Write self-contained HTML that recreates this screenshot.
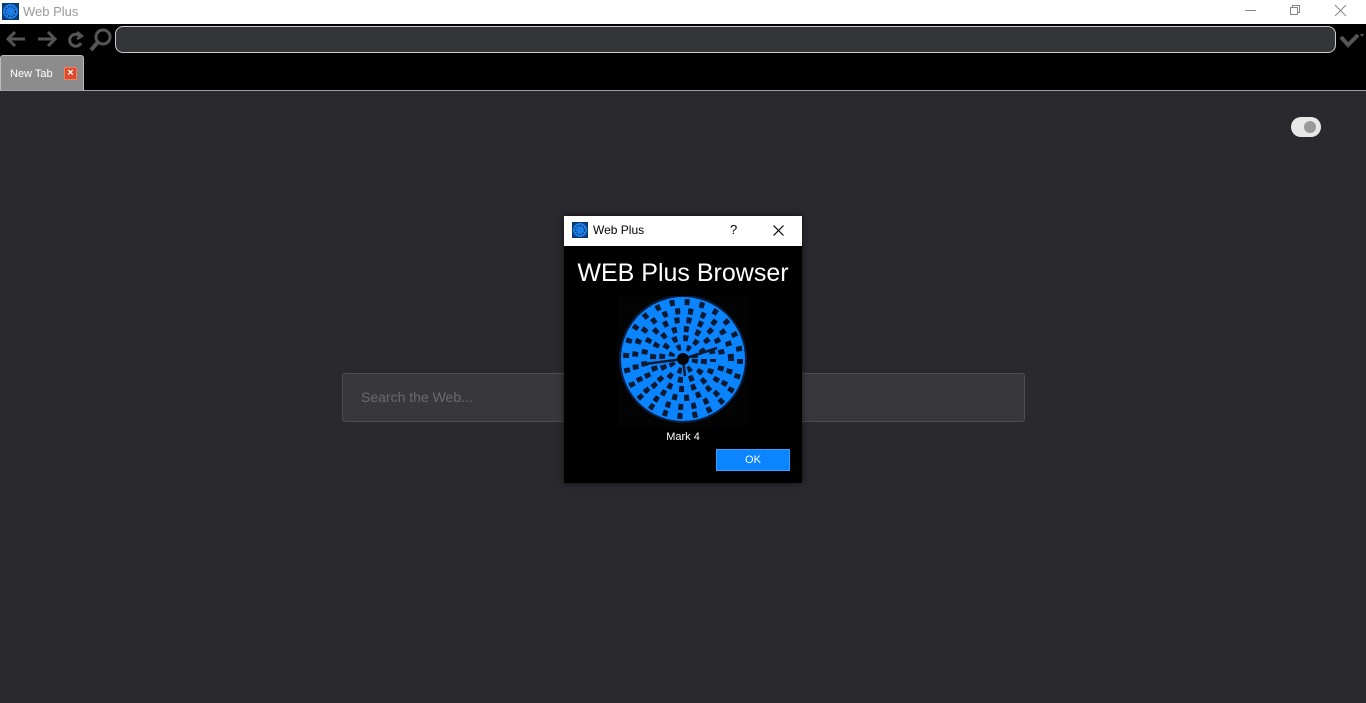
<!DOCTYPE html>
<html><head><style>
*{margin:0;padding:0;box-sizing:border-box}
body{width:1366px;height:703px;overflow:hidden;background:#2a292e;font-family:"Liberation Sans",sans-serif;position:relative}
.abs{position:absolute}
</style></head><body>
<div class="abs" style="left:0;top:0;width:1366px;height:24px;background:#fff"></div>
<svg class="abs" style="left:2px;top:3px" width="17" height="17"><rect width="17" height="17" fill="#0a3a7a"/><circle cx="8.5" cy="8.5" r="7.5" fill="#1a7ee6"/><circle cx="8.5" cy="8.5" r="5" fill="none" stroke="#0a2a55" stroke-width="1.2" stroke-dasharray="1.5 1.5"/></svg>
<div class="abs" style="left:23px;top:4px;font-size:13px;color:#999">Web Plus</div>
<div class="abs" style="left:1245px;top:10px;width:11px;height:1px;background:#888"></div>
<svg class="abs" style="left:1289px;top:4px" width="12" height="12"><rect x="1.5" y="3.5" width="7" height="7" fill="none" stroke="#888"/><path d="M3.5 3.5V1.5h7v7h-2" fill="none" stroke="#888"/></svg>
<svg class="abs" style="left:1334px;top:4px" width="13" height="13"><path d="M1 1L12 12M12 1L1 12" stroke="#888" stroke-width="1"/></svg>
<div class="abs" style="left:0;top:24px;width:1366px;height:66px;background:#000"></div>
<svg class="abs" style="left:5px;top:28px" width="110" height="26" fill="none" stroke="#555" stroke-width="3">
<path d="M3 11H20M10 4L3 11L10 18"/>
<path d="M33 11H50M43 4L50 11L43 18"/>
<path d="M75 8A6 6 0 1 0 76 15" stroke-width="3"/><path d="M72 4L77 8L72 11" stroke-width="2.5"/>
<circle cx="98" cy="9" r="7" stroke-width="3"/><path d="M93 14L86 22" stroke-width="4"/>
</svg>
<div class="abs" style="left:115px;top:26px;width:1221px;height:27px;background:#333538;border:1px solid #ccc;border-radius:8px"></div>
<svg class="abs" style="left:1338px;top:30px" width="28" height="20"><path d="M3 7L10 15L20 5" fill="none" stroke="#555" stroke-width="4"/><path d="M22 4l4 0l-2 3z" fill="#555"/></svg>
<div class="abs" style="left:0;top:55px;width:84px;height:36px;background:#8c8c8c;border:1px solid #bbb;border-radius:3px 3px 0 0"></div>
<div class="abs" style="left:10px;top:68px;font-size:11px;color:#fff">New Tab</div>
<div class="abs" style="left:64px;top:67px;width:13px;height:13px;background:#e04a2a;border:1px solid #f08060;color:#fff;font-size:11px;line-height:11px;text-align:center;font-weight:bold">×</div>
<div class="abs" style="left:0;top:90px;width:1366px;height:1px;background:#a0a0a0"></div>
<div class="abs" style="left:1291px;top:117px;width:30px;height:20px;background:#e8e8e8;border-radius:10px"></div>
<div class="abs" style="left:1304px;top:121px;width:12px;height:12px;background:#999;border-radius:50%"></div>
<div class="abs" style="left:342px;top:373px;width:683px;height:49px;background:#38373c;border:1px solid #4e4d52;border-radius:3px"></div>
<div class="abs" style="left:361px;top:389px;font-size:14px;color:#6a6a6e">Search the Web...</div>
<div class="abs" style="left:564px;top:216px;width:238px;height:267px;background:#000;box-shadow:0 0 6px rgba(0,0,0,.6)"></div>
<div class="abs" style="left:564px;top:216px;width:238px;height:30px;background:#fff"></div>
<svg class="abs" style="left:572px;top:222px" width="16" height="16"><rect width="16" height="16" fill="#0a3a7a"/><circle cx="8" cy="8" r="7" fill="#1a7ee6"/><circle cx="8" cy="8" r="4.5" fill="none" stroke="#0a2a55" stroke-width="1.2" stroke-dasharray="1.5 1.5"/></svg>
<div class="abs" style="left:593px;top:223px;font-size:12px;color:#000">Web Plus</div>
<div class="abs" style="left:730px;top:222px;font-size:13px;color:#000">?</div>
<svg class="abs" style="left:773px;top:225px" width="11" height="11"><path d="M0.5 0.5L10.5 10.5M10.5 0.5L0.5 10.5" stroke="#000" stroke-width="1.2"/></svg>
<div class="abs" style="left:564px;top:259px;width:238px;text-align:center;font-size:25px;color:#fff">WEB Plus Browser</div>
<svg class="abs" style="left:617px;top:296px" width="130" height="130">
<rect width="130" height="130" fill="#030303"/>
<circle cx="66" cy="63" r="64" fill="#0a3a80" opacity=".5"/>
<circle cx="66" cy="63" r="62" fill="#0b84ff"/>
<g fill="none" stroke="#0a1a30" stroke-width="6">
<circle cx="66" cy="63" r="57" stroke-dasharray="5 10"/>
<circle cx="66" cy="63" r="48" stroke-dasharray="5 8" stroke-dashoffset="3"/>
<circle cx="66" cy="63" r="39" stroke-dasharray="5 7" stroke-dashoffset="5"/>
<circle cx="66" cy="63" r="30" stroke-dasharray="5 7" stroke-dashoffset="2"/>
<circle cx="66" cy="63" r="21" stroke-dasharray="5 6"/>
<circle cx="66" cy="63" r="12" stroke-dasharray="4 6"/>
</g>
<path d="M66 63L28 68M66 63L100 52M66 63L68 80" stroke="#0a1a30" stroke-width="2.5"/>
<circle cx="66" cy="63" r="6" fill="#050505"/>
</svg>
<div class="abs" style="left:564px;top:431px;width:238px;text-align:center;font-size:11px;color:#fff">Mark 4</div>
<div class="abs" style="left:716px;top:449px;width:74px;height:22px;background:#0a84ff;border:1px solid #3aa0ff;color:#fff;font-size:11px;text-align:center;line-height:20px">OK</div>
</body></html>
